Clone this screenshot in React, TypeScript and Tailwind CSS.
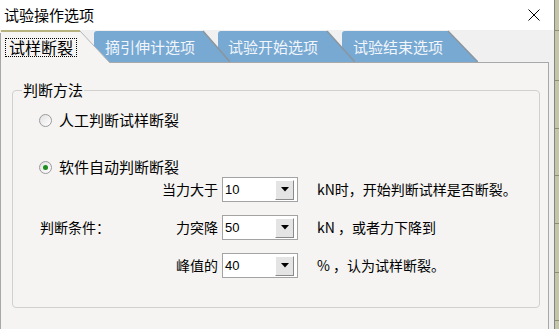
import { useState } from "react";

const cjk = "font-['Noto_Sans_CJK_SC','Noto_Sans',sans-serif]";

type TabDef = {
  label: string;
  width: number;
  slope: number;
  cls: string;
};

const tabs: TabDef[] = [
  { label: "试样断裂", width: 110, slope: 30, cls: "z-40 pl-[5px]" },
  { label: "摘引伸计选项", width: 136, slope: 27, cls: "z-30 -ml-[16px] pl-[11px]" },
  { label: "试验开始选项", width: 137, slope: 28, cls: "z-20 -ml-[12px] pl-[10px]" },
  { label: "试验结束选项", width: 136, slope: 30, cls: "z-10 -ml-[13px] pl-[11px]" },
];

function Tab({ tab, active }: { tab: TabDef; active: boolean }) {
  const w = tab.width;
  const top = w - tab.slope;
  return (
    <div
      className={`relative shrink-0 flex items-center ${active ? "h-[33px] -mb-[1px] pb-[1px]" : "h-[32px]"} ${tab.cls}`}
      style={{ width: w }}
    >
      <svg className="absolute inset-0" width={w} height={active ? 33 : 32}>
        {active ? (
          <>
            <path d={`M0.5,33 L0.5,3 Q0.5,0.5 3,0.5 L${top},0.5 L${w},33 Z`} fill="#f5f4f2" />
            <line x1="0.5" y1="33" x2="0.5" y2="3" stroke="#a6a6a6" />
            <line x1="1" y1="1" x2={top} y2="1" stroke="#b8b27e" strokeWidth="2" />
            <line x1={top} y1="1" x2={w} y2="33" stroke="#b4b4b4" />
          </>
        ) : (
          <>
            <path d={`M0,32 L0,4 Q0,1 3,1 L${top},1 L${w},32 Z`} fill="#77a9d3" />
            <line x1={top} y1="1" x2={w} y2="32" stroke="#8b959d" strokeWidth="1.5" />
          </>
        )}
      </svg>
      {active ? (
        <span className={`relative mt-[2px] border border-dotted border-black px-[3px] text-[16px] leading-[17px] text-black ${cjk}`}>
          {tab.label}
        </span>
      ) : (
        <span className={`relative mt-[2px] text-[15px] leading-[20px] text-[#f2f6fa] ${cjk}`}>{tab.label}</span>
      )}
    </div>
  );
}

function Radio({ checked, label, onClick }: { checked: boolean; label: string; onClick: () => void }) {
  return (
    <div className="flex h-[20px] items-center pl-[26px] cursor-default" onClick={onClick}>
      <span className="flex h-[13px] w-[13px] items-center justify-center rounded-full border border-[#9a9a9a] bg-gradient-to-br from-[#e2e2e2] to-white">
        {checked && <span className="h-[5px] w-[5px] rounded-full bg-[#1c8c1c]" />}
      </span>
      <span className={`ml-[7px] text-[15px] leading-[20px] text-black ${cjk}`}>{label}</span>
    </div>
  );
}

function Combo({ value }: { value: string }) {
  return (
    <div className="flex h-[25px] w-[76px] items-center justify-between border border-[#a3a3a3] bg-white">
      <span className="pl-[2px] font-['Liberation_Sans',sans-serif] text-[13px] text-black">{value}</span>
      <span className="mr-[3px] flex h-[20px] w-[19px] items-center justify-center border border-t-white border-l-white border-r-[#8a8a8a] border-b-[#8a8a8a] bg-[#e4e4e4]">
        <svg width="8" height="5" viewBox="0 0 8 5">
          <path d="M0,0 L8,0 L4,4.5 Z" fill="#000" />
        </svg>
      </span>
    </div>
  );
}

function ComboRow({ left, label, value, suffix }: { left?: string; label: string; value: string; suffix: string }) {
  return (
    <div className={`flex h-[25px] items-center text-[14px] text-black ${cjk}`}>
      <div className={`flex w-[205px] items-center ${left ? "justify-between pl-[27px]" : "justify-end"}`}>
        {left && <span>{left}</span>}
        <span>{label}</span>
      </div>
      <div className="ml-[4px]">
        <Combo value={value} />
      </div>
      <span className="ml-[19px] whitespace-pre">{suffix}</span>
    </div>
  );
}

export default function App() {
  const [mode, setMode] = useState<"manual" | "auto">("auto");

  return (
    <div className={`flex h-[329px] w-[559px] overflow-hidden ${cjk}`}>
      <div className="flex w-[554px] flex-col">
        {/* title bar */}
        <div className="flex h-[30px] shrink-0 items-center justify-between bg-white pl-[4px] pr-[14px]">
          <span className="text-[15px] leading-[20px] text-black">试验操作选项</span>
          <svg width="12" height="12" viewBox="0 0 12 12">
            <path d="M0.5,0.5 L11.5,11.5 M11.5,0.5 L0.5,11.5" stroke="#000" strokeWidth="1" />
          </svg>
        </div>

        <div className="flex flex-1 flex-col bg-[#f0f0f0] pr-[5px]">
          <div className="flex h-[32px] shrink-0">
            {tabs.map((t, i) => (
              <Tab key={t.label} tab={t} active={i === 0} />
            ))}
          </div>

          <div className="flex-1 border-l border-r border-t border-[#a8a8a8] bg-[#f5f4f2] pl-[11px] pt-[27px]">
            <div className="relative h-[218px] w-[528px] rounded-[4px] border border-[#d0d0cc]">
              <span className="absolute -top-[11px] left-[9px] bg-[#f5f4f2] px-[1px] text-[15px] leading-[20px] text-black">
                判断方法
              </span>
              <div className="mt-[19px]">
                <Radio checked={mode === "manual"} label="人工判断试样断裂" onClick={() => setMode("manual")} />
              </div>
              <div className="mt-[27px]">
                <Radio checked={mode === "auto"} label="软件自动判断断裂" onClick={() => setMode("auto")} />
              </div>
              <ComboRow label="当力大于" value="10" suffix="kN时，开始判断试样是否断裂。" />
              <div className="mt-[13px]">
                <ComboRow left="判断条件：" label="力突降" value="50" suffix="kN ，或者力下降到" />
              </div>
              <div className="mt-[13px]">
                <ComboRow label="峰值的" value="40" suffix="% ，认为试样断裂。" />
              </div>
            </div>
          </div>
        </div>
      </div>

      {/* edge of the window behind */}
      <div className="w-[5px] border-l border-[#858585] bg-[#c5c6a5]">
        <svg width="4" height="329">
          {[30, 80, 128, 175, 223, 272, 320].map((y) => (
            <line key={y} x1="0" y1={y + 0.5} x2="4" y2={y + 0.5} stroke="#8f9070" />
          ))}
        </svg>
      </div>
    </div>
  );
}
